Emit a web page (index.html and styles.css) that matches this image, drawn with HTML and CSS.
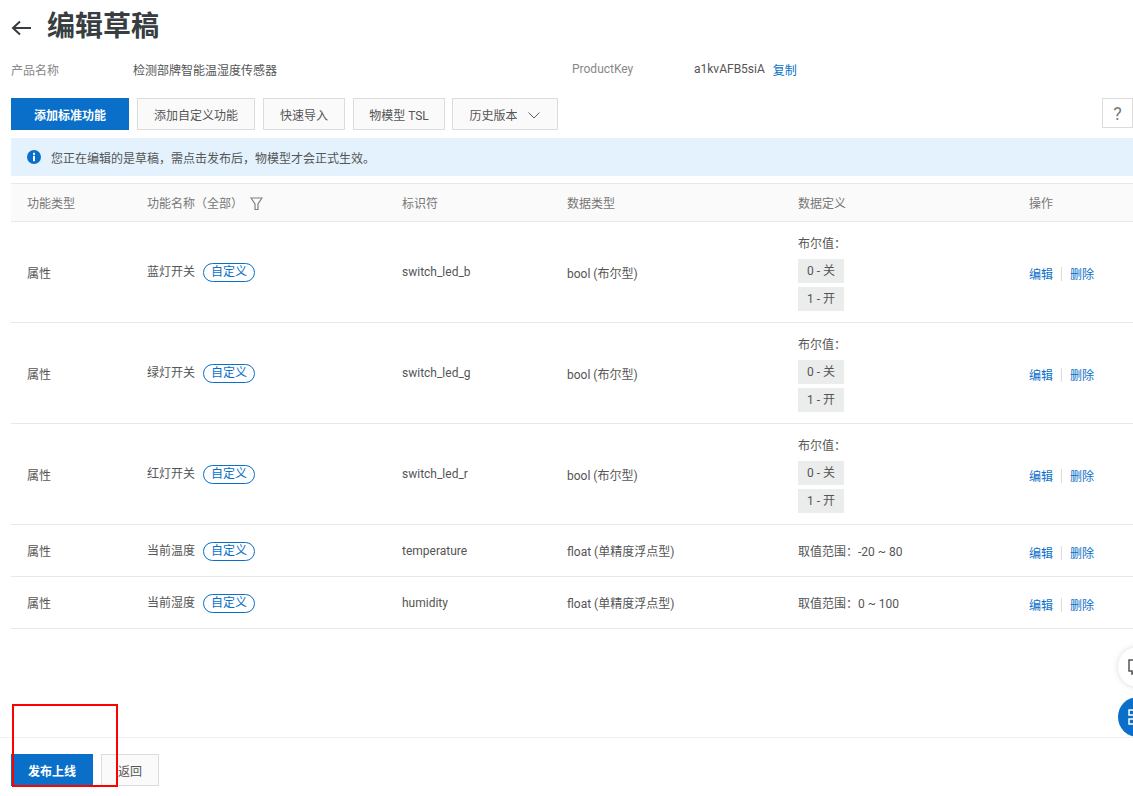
FILE: index.html
```html
<!DOCTYPE html>
<html lang="zh-CN">
<head>
    <meta charset="UTF-8">
    <title>编辑草稿</title>
    <link rel="stylesheet" href="styles.css">
</head>
<body>
    <div class="page">
        <div class="title-row">
            <svg class="back" width="20" height="16" viewBox="0 0 20 16"><path d="M20 8H2M9 1.5L2 8l7 6.5" fill="none" stroke="#373d41" stroke-width="2"/></svg>
            <h1>编辑草稿</h1>
        </div>
        <div class="info-row">
            <span class="info-label">产品名称</span>
            <span class="info-value name">检测部牌智能温湿度传感器</span>
            <span class="info-label">ProductKey</span>
            <span class="info-value">a1kvAFB5siA</span>
            <a class="link copy">复制</a>
        </div>
        <div class="toolbar">
            <button class="btn primary add">添加标准功能</button>
            <button class="btn custom">添加自定义功能</button>
            <button class="btn import">快速导入</button>
            <button class="btn tsl">物模型 TSL</button>
            <button class="btn history">历史版本
                <svg width="12" height="7" viewBox="0 0 12 7"><path d="M.5.5L6 6l5.500-5.500" fill="none" stroke="#5a6066"/></svg>
            </button>
            <button class="btn help">?</button>
        </div>
        <div class="alert">
            <svg width="14" height="14" viewBox="0 0 14 14"><circle cx="7" cy="7" r="7" fill="#0a6fc9"/><rect x="6" y="2.800" width="2" height="2" fill="#fff"/><rect x="6" y="5.800" width="2" height="5.400" fill="#fff"/></svg>
            <span>您正在编辑的是草稿，需点击发布后，物模型才会正式生效。</span>
        </div>
        <table>
            <thead>
                <tr>
                    <th class="col-type">功能类型</th>
                    <th class="col-name">功能名称（全部）
                        <svg class="filter" width="13" height="14" viewBox="0 0 13 14"><path d="M1 1h11L8 7v5.500H5V7z" fill="none" stroke="#7a8085" stroke-width="1.200"/></svg>
                    </th>
                    <th class="col-id">标识符</th>
                    <th class="col-data">数据类型</th>
                    <th class="col-def">数据定义</th>
                    <th>操作</th>
                </tr>
            </thead>
            <tbody>
                <tr>
                    <td>属性</td>
                    <td>蓝灯开关<span class="tag">自定义</span></td>
                    <td>switch_led_b</td>
                    <td>bool (布尔型)</td>
                    <td>
                        <div>布尔值：</div>
                        <div class="bool">0 - 关</div>
                        <div class="bool">1 - 开</div>
                    </td>
                    <td class="ops"><a class="link">编辑</a><i></i><a class="link">删除</a></td>
                </tr>
                <tr>
                    <td>属性</td>
                    <td>绿灯开关<span class="tag">自定义</span></td>
                    <td>switch_led_g</td>
                    <td>bool (布尔型)</td>
                    <td>
                        <div>布尔值：</div>
                        <div class="bool">0 - 关</div>
                        <div class="bool">1 - 开</div>
                    </td>
                    <td class="ops"><a class="link">编辑</a><i></i><a class="link">删除</a></td>
                </tr>
                <tr>
                    <td>属性</td>
                    <td>红灯开关<span class="tag">自定义</span></td>
                    <td>switch_led_r</td>
                    <td>bool (布尔型)</td>
                    <td>
                        <div>布尔值：</div>
                        <div class="bool">0 - 关</div>
                        <div class="bool">1 - 开</div>
                    </td>
                    <td class="ops"><a class="link">编辑</a><i></i><a class="link">删除</a></td>
                </tr>
                <tr class="short">
                    <td>属性</td>
                    <td>当前温度<span class="tag">自定义</span></td>
                    <td>temperature</td>
                    <td>float (单精度浮点型)</td>
                    <td>取值范围：-20 ~ 80</td>
                    <td class="ops"><a class="link">编辑</a><i></i><a class="link">删除</a></td>
                </tr>
                <tr class="short">
                    <td>属性</td>
                    <td>当前湿度<span class="tag">自定义</span></td>
                    <td>humidity</td>
                    <td>float (单精度浮点型)</td>
                    <td>取值范围：0 ~ 100</td>
                    <td class="ops"><a class="link">编辑</a><i></i><a class="link">删除</a></td>
                </tr>
            </tbody>
        </table>
        <div class="footer">
            <button class="btn primary publish">发布上线</button>
            <button class="btn back-btn">返回</button>
        </div>
    </div>

    <div class="float-btn chat">
        <svg width="16" height="16" viewBox="0 0 16 16"><path d="M1 1h14v11H7l-3 3v-3H1z" fill="none" stroke="#555" stroke-width="1.500"/></svg>
    </div>
    <div class="float-btn apps">
        <svg width="16" height="16" viewBox="0 0 16 16"><path d="M1 1h5v5H1zM10 1h5v5h-5zM1 10h5v5H1zM10 10h5v5h-5z" fill="none" stroke="#fff" stroke-width="1.500"/></svg>
    </div>
    <div class="red-box"></div>
</body>
</html>
```

FILE: styles.css
```css
* {
    box-sizing: border-box;
}
html, body {
    margin: 0;
    padding: 0;
    height: 796px;
    overflow: hidden;
    background: white;
}
body {
    position: relative;
    font-family: Roboto, "Noto Sans CJK SC", sans-serif;
    font-size: 12px;
    color: #555;
}
.title-row {
    display: flex;
    align-items: center;
    height: 54px;
    padding-left: 11px;
}
.back {
    margin-right: 16px;
    margin-top: 2px;
}
h1 {
    margin: 0;
    font-size: 28px;
    font-weight: bold;
    color: #373d41;
    line-height: 54px;
}
.info-row {
    display: flex;
    align-items: center;
    height: 30px;
    padding-left: 11px;
}
.info-label {
    width: 122px;
    color: #888;
}
.info-value {
    color: #555;
}
.info-value.name {
    width: 439px;
}
.link {
    color: #0a6fc9;
    cursor: pointer;
}
.copy {
    margin-left: 8px;
}
.toolbar {
    display: flex;
    gap: 8px;
    margin-top: 14px;
    padding-left: 11px;
}
.btn {
    height: 32px;
    padding: 0;
    border: 1px solid #dcdcdc;
    background: #fafafa;
    color: #555;
    font-family: inherit;
    font-size: 12px;
    cursor: pointer;
}
.btn.primary {
    background: #0a6fc9;
    border-color: #0a6fc9;
    color: white;
    font-weight: bold;
}
.add { width: 118px; }
.custom { width: 118px; }
.import { width: 82px; }
.tsl { width: 92px; }
.history { width: 106px; margin-left: -1px; }
.history svg {
    margin-left: 8px;
    vertical-align: 1px;
}
.help {
    width: 31px;
    height: 30px;
    margin-left: auto;
    font-size: 18px;
    color: #777;
    background: white;
}
.alert {
    display: flex;
    align-items: center;
    gap: 10px;
    height: 38px;
    margin: 8px 0 7px 11px;
    padding-left: 16px;
    background: #e3f2fd;
}
table {
    width: 1122px;
    margin-left: 11px;
    border-collapse: collapse;
    table-layout: fixed;
}
th {
    height: 38px;
    padding: 0 16px;
    background: #fafafa;
    border-top: 1px solid #e8e8e8;
    border-bottom: 1px solid #e8e8e8;
    font-weight: normal;
    text-align: left;
    color: #777;
}
.col-type { width: 120px; }
.col-name { width: 255px; }
.col-id { width: 165px; }
.col-data { width: 231px; }
.col-def { width: 231px; }
.filter {
    margin-left: 4px;
    vertical-align: -3px;
}
td {
    height: 101px;
    padding: 0 16px;
    border-bottom: 1px solid #e8e8e8;
    vertical-align: middle;
}
.short td {
    height: 52px;
}
.tag {
    display: inline-block;
    width: 52px;
    height: 19px;
    margin-left: 8px;
    border: 1px solid #0a6fc9;
    border-radius: 10px;
    color: #0a6fc9;
    line-height: 17px;
    text-align: center;
}
.bool {
    width: 46px;
    height: 24px;
    margin-top: 4px;
    background: #ebecec;
    line-height: 24px;
    text-align: center;
}
td > div:first-child {
    margin-bottom: 8px;
}
.ops {
    padding-top: 3px;
}
.ops i {
    display: inline-block;
    width: 1px;
    height: 14px;
    margin: 0 8px;
    background: #dcdcdc;
    vertical-align: -2px;
}
.footer {
    display: flex;
    gap: 8px;
    margin-top: 108px;
    padding: 16px 0 0 11px;
    border-top: 1px solid #f0f0f0;
}
.publish { width: 82px; }
.back-btn { width: 58px; }
.float-btn {
    position: absolute;
    left: 1118px;
    width: 40px;
    height: 40px;
    border-radius: 50%;
    display: flex;
    align-items: center;
    padding-left: 10px;
}
.chat {
    top: 647px;
    background: white;
    box-shadow: 0 0 6px rgba(0,0,0,0.15);
}
.apps {
    top: 697px;
    background: #0a6fc9;
}
.red-box {
    position: absolute;
    left: 12px;
    top: 704px;
    width: 106px;
    height: 83px;
    border: 2px solid #f00;
}
```
